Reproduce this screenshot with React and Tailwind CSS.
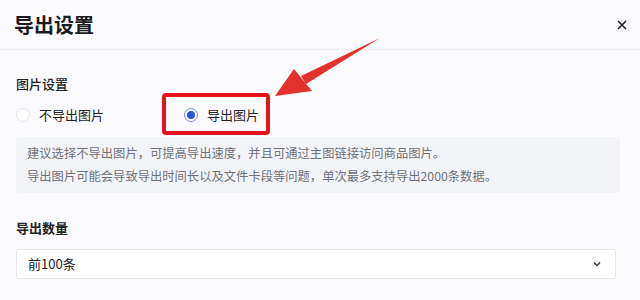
import React, { useState } from 'react';

const font = { fontFamily: '"Noto Sans CJK SC", "Noto Sans", sans-serif' };

const Radio = ({ checked, label, onClick }) => (
  <button type="button" onClick={onClick} className="flex items-center gap-[9px]">
    <span
      className={
        checked
          ? 'w-[14px] h-[14px] rounded-full border border-[#7d8fc9] bg-white flex items-center justify-center'
          : 'w-[14px] h-[14px] rounded-full border border-[#e4e6ea] bg-white'
      }
    >
      {checked && <span className="w-[8px] h-[8px] rounded-full bg-[#2f54d6]"></span>}
    </span>
    <span className="text-[13px] text-[#222] leading-[20px]">{label}</span>
  </button>
);

export default function App() {
  const [exportImg, setExportImg] = useState(true);

  return (
    <div className="relative w-[640px] h-[300px] bg-[#fbfbfd] overflow-hidden" style={font}>
      {/* Header */}
      <div className="h-[50px] flex items-center justify-between pl-[14px] pr-[13px] border-b border-[#eceef2]">
        <h1 className="text-[20px] font-bold text-[#1b1b1f] leading-none">导出设置</h1>
        <svg className="w-[10px] h-[10px]" viewBox="0 0 10 10" fill="none" stroke="#222" strokeWidth="1.6">
          <path d="M1 1l8 8M9 1l-8 8" />
        </svg>
      </div>

      <div className="px-4">
        <div className="mt-[24px] text-[13px] font-medium text-[#222] leading-[20px]">图片设置</div>

        <div className="mt-[11px] flex items-center gap-[80px] h-[20px]">
          <Radio checked={!exportImg} label="不导出图片" onClick={() => setExportImg(false)} />
          <Radio checked={exportImg} label="导出图片" onClick={() => setExportImg(true)} />
        </div>

        <div className="mt-[12px] w-[604px] bg-[#f3f4f8] rounded-[3px] px-[11px] py-[5px] text-[12.3px] text-[#707277] leading-[23px]">
          <p>建议选择不导出图片，可提高导出速度，并且可通过主图链接访问商品图片。</p>
          <p>导出图片可能会导致导出时间长以及文件卡段等问题，单次最多支持导出2000条数据。</p>
        </div>

        <div className="mt-[25px] text-[13px] font-bold text-[#222] leading-[20px]">导出数量</div>

        <div className="mt-[11px] w-[600px] h-[30px] bg-white border border-[#e6e7eb] rounded-[3px] flex items-center justify-between pl-[11px] pr-[13px]">
          <span className="text-[13px] text-[#222]">前100条</span>
          <svg className="w-[10px] h-[10px]" viewBox="0 0 10 10" fill="none" stroke="#333" strokeWidth="1.4">
            <path d="M2 3.5l3 3 3-3" />
          </svg>
        </div>
      </div>

      {/* Annotation: red box */}
      <div className="absolute left-[162px] top-[93px] w-[108px] h-[42px] border-[4px] border-[#e3141b] rounded-[4px]"></div>

      {/* Annotation: arrow */}
      <svg className="absolute left-0 top-0 w-[640px] h-[300px] pointer-events-none" viewBox="0 0 640 300">
        <path d="M380 38 L301 76 L306 84 Z" fill="#e3312c" />
        <path d="M275 96 L294 69 L312 91 Z" fill="#e3312c" />
      </svg>
    </div>
  );
}
